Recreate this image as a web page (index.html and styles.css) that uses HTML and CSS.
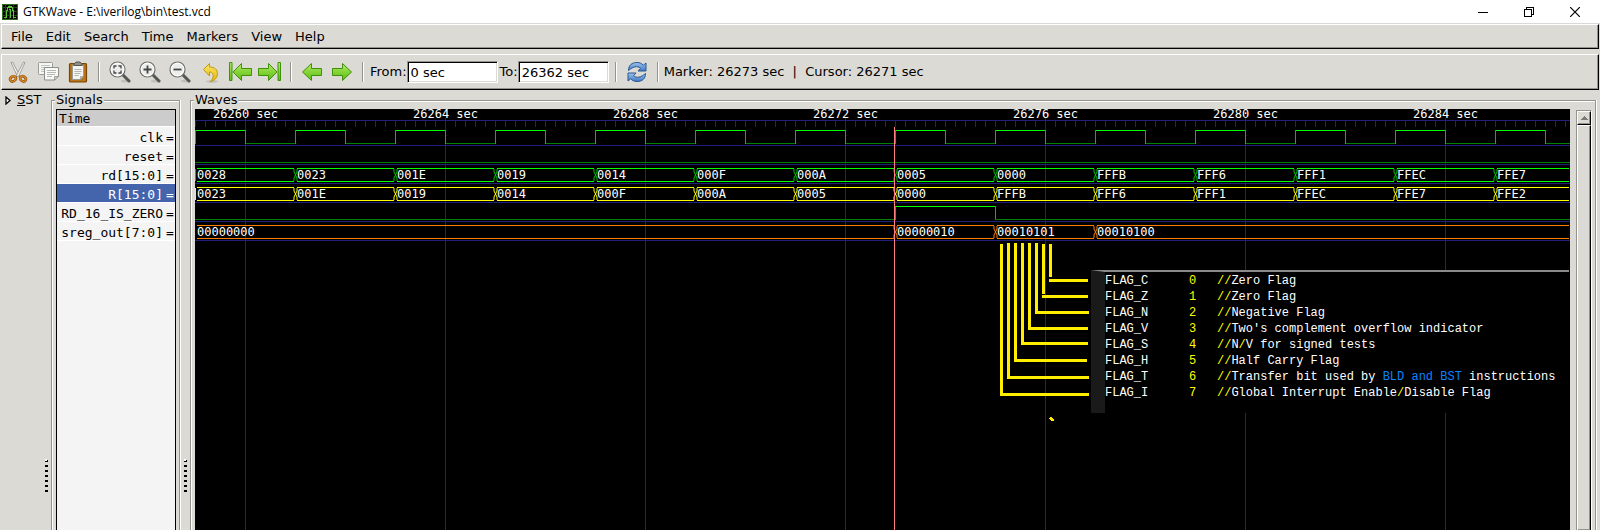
FILE: index.html
```html
<!DOCTYPE html>
<html lang="en">
<head>
<meta charset="utf-8">
<title>GTKWave - E:\iverilog\bin\test.vcd</title>
<link rel="stylesheet" href="styles.css">
</head>
<body>
<div class="window">
  <header class="titlebar">
    <svg class="app-icon" width="16" height="16" viewBox="0 0 16 16" shape-rendering="crispEdges" aria-hidden="true">
      <rect width="16" height="16" fill="#000"/>
      <path d="M0 3h16v1H0zM0 7h16v1H0zM0 11h16v1H0zM3 0h1v16H3zM7 0h1v16H7zM11 0h1v16h-1z" fill="#1c4a12"/>
      <path d="M0 0h16v16H0zM1 1v14h14V1z" fill="#2f6b1c" fill-rule="evenodd"/>
      <path d="M2 13h2V6h1V3h1V2h4v1h1v3h1v7h2v1h-3V7h-1V4H6v3H5v7H2zM7 5h2v9H8V6H7z" fill="#5fc23c"/>
    </svg>
    <h1 class="title">GTKWave - E:\iverilog\bin\test.vcd</h1>
    <div class="window-buttons">
      <button type="button" aria-label="Minimize"><svg width="10" height="10" shape-rendering="crispEdges"><path d="M0 5h10v1H0z"/></svg></button>
      <button type="button" aria-label="Restore"><svg width="10" height="10" shape-rendering="crispEdges"><path d="M2 0h8v8H8V7h1V1H3v1H2zM0 2h8v8H0zM1 3v6h6V3z" fill-rule="evenodd"/></svg></button>
      <button type="button" aria-label="Close"><svg width="10" height="10"><path d="M0 0L10 10M10 0L0 10" stroke="#000" stroke-width="1.2"/></svg></button>
    </div>
  </header>

  <nav class="menubar" aria-label="Main menu">
    <button type="button">File</button>
    <button type="button">Edit</button>
    <button type="button">Search</button>
    <button type="button">Time</button>
    <button type="button">Markers</button>
    <button type="button">View</button>
    <button type="button">Help</button>
  </nav>

  <svg width="0" height="0" class="defs" aria-hidden="true">
    <defs>
      <linearGradient id="green" x1="0" y1="0" x2="0" y2="1"><stop offset="0" stop-color="#b4ea70"/><stop offset=".5" stop-color="#84d436"/><stop offset="1" stop-color="#5cb814"/></linearGradient>
      <linearGradient id="gold" x1="0" y1="0" x2="0" y2="1"><stop offset="0" stop-color="#fbe870"/><stop offset="1" stop-color="#e2b400"/></linearGradient>
      <linearGradient id="blue" x1="0" y1="0" x2="0" y2="1"><stop offset="0" stop-color="#9cc4ee"/><stop offset="1" stop-color="#3f78c0"/></linearGradient>
      <g id="lens">
        <ellipse cx="18" cy="21" rx="5" ry="1.5" fill="#000" opacity=".12"/>
        <path d="M15 15l6 6" stroke="#555753" stroke-width="3" stroke-linecap="round"/>
        <circle cx="9.500" cy="9.500" r="7.500" fill="#eceeec" stroke="#6c6e6a" stroke-width="1.200"/>
        <circle cx="9.500" cy="9.500" r="6.300" fill="none" stroke="#fff" stroke-width="1"/>
      </g>
      <path id="arrow" d="M2.500 12L11.500 3.500V8.500H21.500V15.500H11.500V20.500Z" fill="url(#green)" stroke="#3f9108" stroke-linejoin="round"/>
    </defs>
  </svg>

  <div class="toolbar">
    <button type="button" aria-label="Cut"><svg viewBox="0 0 24 24">
      <path d="M5 2.500L6.500 2 14 16l-2.500.5Z" fill="#f4f4f2" stroke="#8c8e8a" stroke-width=".8"/>
      <path d="M19 2.500L17.500 2 10 16l2.500.5Z" fill="#f4f4f2" stroke="#8c8e8a" stroke-width=".8"/>
      <ellipse cx="7" cy="18.800" rx="3" ry="2.400" transform="rotate(-35 7 18.800)" fill="#dcdad5" stroke="#8f4d04" stroke-width="2.600"/>
      <ellipse cx="17" cy="18.800" rx="3" ry="2.400" transform="rotate(35 17 18.800)" fill="#dcdad5" stroke="#8f4d04" stroke-width="2.600"/>
      <ellipse cx="7" cy="18.800" rx="3" ry="2.400" transform="rotate(-35 7 18.800)" fill="none" stroke="#d98a28" stroke-width="1.300"/>
      <ellipse cx="17" cy="18.800" rx="3" ry="2.400" transform="rotate(35 17 18.800)" fill="none" stroke="#d98a28" stroke-width="1.300"/>
    </svg></button>
    <button type="button" aria-label="Copy"><svg viewBox="0 0 24 24">
      <rect x="2.500" y="2.500" width="14" height="12" rx="1" fill="#f6f6f5" stroke="#989a96"/>
      <path d="M5 5.500h9M5 7.500h9M5 9.500h9M5 11.500h6" stroke="#c2c4c0"/>
      <path d="M8.500 7.500h14v9l-4 3.500h-10z" fill="#f8f8f7" stroke="#8c8e8a"/>
      <path d="M11 10.500h9M11 12.500h9M11 14.500h8M11 16.500h5" stroke="#b8bab6"/>
      <path d="M22.500 16.500l-4 3.500v-3.500z" fill="#d8dad6" stroke="#8c8e8a" stroke-width=".8"/>
    </svg></button>
    <button type="button" aria-label="Paste"><svg viewBox="0 0 24 24">
      <rect x="3.500" y="3.500" width="17" height="18.500" rx="1" fill="#b8741a" stroke="#7a4503" stroke-width="1.200"/>
      <path d="M6.500 5.500h11v11l-3 3h-8z" fill="#f4f4f2" stroke="#999b97"/>
      <path d="M8.500 9.500h7M8.500 11.500h7M8.500 13.500h6M8.500 15.500h4" stroke="#b5b7b3"/>
      <path d="M17.500 16.500l-3 3v-3z" fill="#c4c6c2" stroke="#888a85" stroke-width=".6"/>
      <path d="M8 5.500V4l2-2h4l2 2v1.500z" fill="#8d8f8b" stroke="#555753"/>
    </svg></button>
    <span class="separator"></span>
    <button type="button" aria-label="Zoom fit"><svg viewBox="0 0 24 24"><use href="#lens"/><path d="M6 8.500V6h2.500M10.500 6H13v2.500M13 10.500V13h-2.500M8.500 13H6v-2.500" fill="none" stroke="#444" stroke-width="1.300"/></svg></button>
    <button type="button" aria-label="Zoom in"><svg viewBox="0 0 24 24"><use href="#lens"/><path d="M5.500 9.500h8M9.500 5.500v8" stroke="#444" stroke-width="1.800"/></svg></button>
    <button type="button" aria-label="Zoom out"><svg viewBox="0 0 24 24"><use href="#lens"/><path d="M5.500 9.500h8" stroke="#444" stroke-width="1.800"/></svg></button>
    <button type="button" aria-label="Undo zoom"><svg viewBox="0 0 24 24">
      <ellipse cx="14" cy="21.500" rx="6" ry="1.500" fill="#000" opacity=".12"/>
      <path d="M5.500 9.500L11.500 3.500V7C17 7 19.500 10 19.500 13.500 19.500 17.500 17 20.500 12.500 21.500 15 18.500 16 15.500 14.500 13.500 13.800 12.500 12.800 12 11.500 12V16Z" fill="url(#gold)" stroke="#c29a08" stroke-linejoin="round"/>
    </svg></button>
    <button type="button" aria-label="Go to start"><svg viewBox="0 0 24 24"><path d="M1.500 2.500h2.500v18h-2.500z" fill="url(#green)" stroke="#3f9108"/><path d="M5 12L13.500 3.500V8.500H23.500V15.500H13.500V20.500Z" fill="url(#green)" stroke="#3f9108" stroke-linejoin="round"/></svg></button>
    <button type="button" aria-label="Go to end"><svg viewBox="0 0 24 24"><path d="M20 2.500h2.500v18h-2.500z" fill="url(#green)" stroke="#3f9108"/><path d="M19 12L10.500 3.500V8.500H.5V15.500H10.500V20.500Z" fill="url(#green)" stroke="#3f9108" stroke-linejoin="round"/></svg></button>
    <span class="separator"></span>
    <button type="button" aria-label="Previous edge"><svg viewBox="0 0 24 24"><use href="#arrow"/></svg></button>
    <button type="button" aria-label="Next edge"><svg viewBox="0 0 24 24"><use href="#arrow" transform="matrix(-1 0 0 1 24 0)"/></svg></button>
    <span class="separator"></span>
    <label for="from">From:</label><input id="from" type="text" value="0 sec">
    <label for="to">To:</label><input id="to" type="text" value="26362 sec">
    <span class="separator"></span>
    <button type="button" aria-label="Reload"><svg viewBox="0 0 24 24">
      <path d="M3.500 10.500C3.500 5 7 2.500 12 2.500 14.800 2.500 16.800 3.500 18.300 5.200L21 3V11H13L15.500 8.300C12.500 5.500 8 6.500 3.500 10.500Z" fill="url(#blue)" stroke="#2a5794" stroke-linejoin="round"/>
      <path d="M20.500 13.500C20.500 19 17 21.500 12 21.500 9.200 21.500 7.200 20.500 5.700 18.800L3 21V13H11L8.500 15.700C11.500 18.500 16 17.500 20.500 13.500Z" fill="url(#blue)" stroke="#2a5794" stroke-linejoin="round"/>
    </svg></button>
    <span class="separator"></span>
    <output class="status">Marker: 26273 sec&nbsp; |&nbsp; Cursor: 26271 sec</output>
  </div>

  <main class="panes">
    <section class="sst">
      <button type="button" class="expander"><svg width="6" height="9" aria-hidden="true"><path d="M1 1v7L5 4.500z" fill="#fff" stroke="#000" stroke-width="1.300"/></svg><span><u>S</u>ST</span></button>
    </section>
    <div class="sash"></div>
    <fieldset class="frame signals">
      <legend>Signals</legend>
      <ul class="signal-list">
        <li class="time">Time</li>
        <li>clk<b>=</b></li>
        <li>reset<b>=</b></li>
        <li>rd[15:0]<b>=</b></li>
        <li class="selected">R[15:0]<b>=</b></li>
        <li>RD_16_IS_ZERO<b>=</b></li>
        <li>sreg_out[7:0]<b>=</b></li>
      </ul>
    </fieldset>
    <div class="sash"></div>
    <fieldset class="frame waves">
      <legend>Waves</legend>
      <div class="canvas">
        <svg id="wave" class="wave" role="img" aria-label="Waveforms"></svg>
        <div class="notes">
          <div class="note"><span>FLAG_C</span><i>0</i><span><i>//</i>Zero Flag</span></div>
          <div class="note"><span>FLAG_Z</span><i>1</i><span><i>//</i>Zero Flag</span></div>
          <div class="note"><span>FLAG_N</span><i>2</i><span><i>//</i>Negative Flag</span></div>
          <div class="note"><span>FLAG_V</span><i>3</i><span><i>//</i>Two's complement overflow indicator</span></div>
          <div class="note"><span>FLAG_S</span><i>4</i><span><i>//</i>N<i>/</i>V for signed tests</span></div>
          <div class="note"><span>FLAG_H</span><i>5</i><span><i>//</i>Half Carry Flag</span></div>
          <div class="note"><span>FLAG_T</span><i>6</i><span><i>//</i>Transfer bit used by <em>BLD and BST</em> instructions</span></div>
          <div class="note"><span>FLAG_I</span><i>7</i><span><i>//</i>Global Interrupt Enable<i>/</i>Disable Flag</span></div>
        </div>
      </div>
      <div class="scrollbar">
        <button type="button" aria-label="Scroll up"><svg width="7" height="4" shape-rendering="crispEdges"><path d="M3 0h1v1h1v1h1v1h1v1H0V3h1V2h1V1h1z" fill="#7d7b76"/></svg></button>
        <div class="thumb"></div>
      </div>
    </fieldset>
  </main>
</div>
<script src="wave.js"></script>
</body>
</html>
```
FILE: styles.css
```css
* { box-sizing: border-box; }
body {
  margin: 0;
  background: #dcdad5;
  color: #000;
  font: 13px/16px "DejaVu Sans", sans-serif;
}
button {
  border: 0;
  padding: 0;
  background: none;
  color: inherit;
  font: inherit;
}
.window { display: flex; flex-direction: column; height: 100vh; overflow: hidden; }
.defs { position: absolute; }

.titlebar {
  display: flex;
  align-items: center;
  flex: none;
  height: 24px;
  padding-left: 2px;
  background: #fff;
  border-bottom: 1px solid #d8d8d8;
}
.app-icon { margin-right: 5px; }
.title { margin: 0; font: 12px/16px "Open Sans", sans-serif; }
.window-buttons { display: flex; margin-left: auto; padding-right: 2px; }
.window-buttons button { display: grid; place-items: center; width: 46px; height: 20px; }

.menubar, .toolbar {
  display: flex;
  align-items: center;
  flex: none;
  margin: 0 1px;
  border: 1px solid #fff;
  border-right-color: #000;
  border-bottom-color: #000;
  box-shadow: inset -1px -1px 0 #95938e;
}
.menubar { height: 25px; padding-left: 3px; }
.menubar button { padding: 0 7px 0 6px; }
.toolbar { height: 36px; margin-top: 5px; padding-left: 1px; }
.toolbar button { display: grid; place-items: center; flex: none; width: 30px; height: 30px; }
.toolbar button svg { width: 24px; height: 24px; }
.separator {
  flex: none;
  width: 2px;
  height: 20px;
  margin: 0 5px;
  border-left: 1px solid #95938e;
  border-right: 1px solid #fff;
}
.toolbar label { padding-left: 1px; }
.toolbar input {
  width: 91px;
  height: 22px;
  margin: 0 1px 0 0;
  padding: 1px 0 0 2px;
  border: 1px solid #fff;
  border-top-color: #95938e;
  border-left-color: #95938e;
  box-shadow: inset 1px 1px 0 #000, inset -1px -1px 0 #dcdad5;
  background: #fff;
  font: inherit;
  outline: 0;
  text-indent: 1px;
}

.panes { display: flex; flex: 1; min-height: 0; padding: 2px 4px 0 0; }
.sst { flex: none; width: 41px; padding-left: 5px; white-space: nowrap; }
.expander { display: flex; align-items: center; gap: 6px; }
.sash {
  flex: none;
  width: 10px;
  padding-top: 367px;
}
.sash::before {
  content: "";
  display: block;
  width: 3px;
  height: 33px;
  margin-left: 4px;
  background:
    linear-gradient(#fff, #fff) 0 0 / 2px 2px no-repeat,
    repeating-linear-gradient(transparent 0 1px, #000 1px 3px, transparent 3px 5px);
}
.frame {
  display: flex;
  min-width: 0;
  margin: 0;
  padding: 1px 3px 0 4px;
  border: 1px solid #95938e;
  border-bottom: 0;
  box-shadow: 1px 0 0 #fff, inset 1px 1px 0 #fff;
}
.frame legend {
  height: 16px;
  margin-left: -1px;
  padding: 0 1px;
  background: #dcdad5;
}
.signals { flex: none; width: 129px; }
.signal-list {
  flex: 1;
  margin: 0;
  padding: 0;
  border: 1px solid #000;
  border-bottom: 0;
  background: #f4f4f4;
  list-style: none;
  font: 13px/16px "DejaVu Sans Mono", monospace;
  white-space: nowrap;
}
.signal-list li {
  display: flex;
  justify-content: flex-end;
  height: 19px;
  padding-top: 3px;
  border-bottom: 1px solid #fff;
}
.signal-list b { width: 9px; margin-left: 3px; font-weight: 400; overflow: hidden; }
.signal-list .time { justify-content: flex-start; height: 17px; padding: 1px 2px 0; background: #ccc; }
.signal-list .selected { background: #4464ac; color: #fff; }

.waves { flex: 1; gap: 6px; }
.canvas { position: relative; flex: 1; min-width: 0; background: #000; clip-path: inset(-4px 0 0 0); }
.wave { display: block; width: 100%; height: 100%; overflow: visible; }
.wave text { fill: #fff; font: 12px "DejaVu Sans Mono", monospace; }
.notes {
  position: absolute;
  left: 896px;
  right: 1px;
  top: 161px;
  padding: 1px 0 12px;
  border-top: 2px solid #8a8a8a;
  border-left: 14px solid #1a1a1a;
  background: #000;
  color: #fff;
  font: 12px/16px "Liberation Mono", monospace;
  white-space: nowrap;
}
.note { display: grid; grid-template-columns: 84px 28px 1fr; }
.note i { color: #ff0; font-style: normal; }
.note em { color: #0a84ff; font-style: normal; }

.scrollbar {
  display: flex;
  flex-direction: column;
  flex: none;
  width: 16px;
  margin-top: 1px;
  border: 1px solid #95938e;
  border-right-color: #fff;
  border-bottom: 0;
}
.scrollbar button, .thumb {
  border: 1px solid #fff;
  border-right-color: #000;
  border-bottom-color: #000;
  box-shadow: inset -1px -1px 0 #95938e;
}
.scrollbar button { display: grid; place-items: center; height: 14px; }
.thumb { flex: 1; border-bottom: 0; }
```
FILE: wave.js
```javascript
const svg = document.getElementById('wave');
const NS = 'http://www.w3.org/2000/svg';
const END = 1374;

function add(tag, attrs, text) {
  const el = document.createElementNS(NS, tag);
  for (const k in attrs) el.setAttribute(k, attrs[k]);
  if (text) el.textContent = text;
  svg.appendChild(el);
}
const box = (x, y, width, height, fill) => add('rect', { x, y, width, height, fill });

// Ruler and grid
box(0, 11, '100%', 1, '#20207a');
for (let x = 0; x <= END; x += 10) box(x, 12, 1, 6, '#20207a');
for (let y = 36; y <= 131; y += 19) box(0, y, '100%', 1, '#20207a');
for (let x = 50; x < END; x += 200) box(x, 9, 1, '100%', '#20207a');
for (let i = 0; i < 7; i++) add('text', { x: 18 + i * 200, y: 9 }, (26260 + i * 4) + ' sec');

// Clock
for (let x = 0; x < END; x += 100) {
  box(x, 21, 51, 1, '#00ff00');
  box(x + 50, 34, 50, 1, '#008000');
  box(x, 21, 1, 14, '#00c000');
  box(x + 50, 21, 1, 14, '#00c000');
}

// reset and RD_16_IS_ZERO
box(0, 53, '100%', 1, '#008000');
box(0, 110, 700, 1, '#008000');
box(700, 97, 101, 1, '#00ff00');
box(700, 97, 1, 14, '#00c000');
box(800, 97, 1, 14, '#00c000');
box(800, 110, '100%', 1, '#008000');

function bus(top, color, edge, values) {
  values.forEach(([start, label], i) => {
    const stop = i + 1 < values.length ? values[i + 1][0] : END + 1;
    box(start + 2, top, stop - start - 3, 1, color);
    box(start + 2, top + 13, stop - start - 3, 1, color);
    if (i > 0) {
      add('path', {
        d: `M${start - 1} ${top + 1}v3l3 6v3M${start + 2} ${top + 1}v3l-3 6v3`,
        fill: 'none', stroke: edge
      });
    }
    add('text', { x: start + 2, y: top + 11 }, label);
  });
}
const every = list => list.split(' ').map((v, i) => [i * 100, v]);
bus(59, '#00ff00', '#00c000', every('0028 0023 001E 0019 0014 000F 000A 0005 0000 FFFB FFF6 FFF1 FFEC FFE7'));
bus(78, '#ffff00', '#ffff00', every('0023 001E 0019 0014 000F 000A 0005 0000 FFFB FFF6 FFF1 FFEC FFE7 FFE2'));
bus(116, '#ff8000', '#ff8000', [[0, '00000000'], [700, '00000010'], [800, '00010101'], [900, '00010100']]);
box(0, 60, 1, 12, '#00c000');
box(0, 79, 1, 12, '#ffff00');

// Marker
box(699, 18, 1, '100%', '#ff8080');

// Flag leader lines: x, top, bottom of the drop, y and right end of the arm
const leaders = [
  [854, 135, 168, 170, 893], [847, 135, 185, 186, 893],
  [840, 134, 202, 202, 894], [833, 134, 218, 218, 893],
  [826, 134, 233, 233, 893], [819, 134, 250, 250, 892],
  [812, 134, 267, 267, 894], [805, 135, 284, 284, 894]
];
for (const [x, top, bottom, y, right] of leaders) {
  box(x, top, 3, bottom - top, '#ffee00');
  box(x, y, right - x, 3, '#ffee00');
}
add('path', { d: 'M855 308h2v1h1v1h1v2h-3v-1h-1v-1h-1v-1h1z', fill: '#ffee00' });
```
